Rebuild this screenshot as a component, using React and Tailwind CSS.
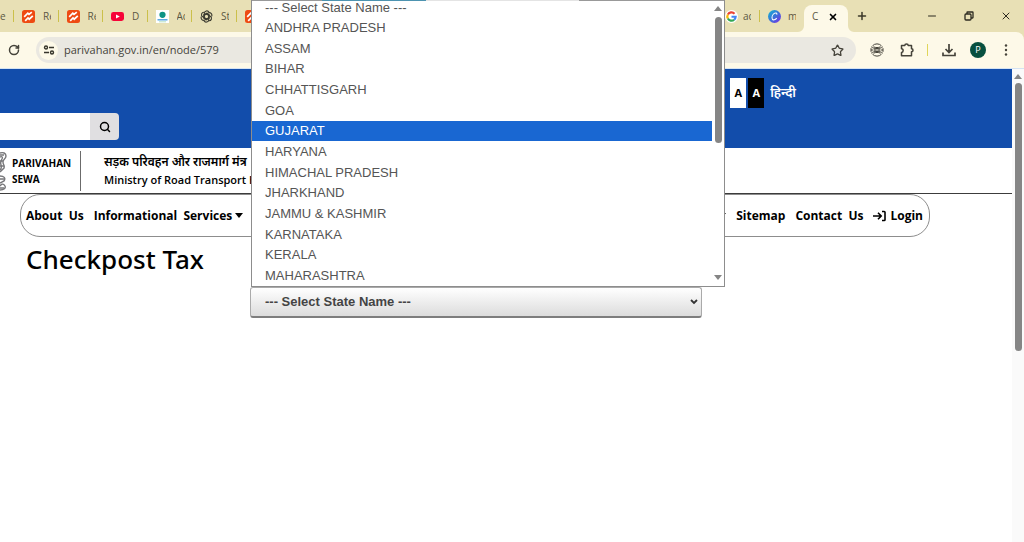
import React, { useState } from "react";
import { Minus, Plus, X, RotateCw, Star, Search } from "lucide-react";

const STATES = [
  "--- Select State Name ---",
  "ANDHRA PRADESH",
  "ASSAM",
  "BIHAR",
  "CHHATTISGARH",
  "GOA",
  "GUJARAT",
  "HARYANA",
  "HIMACHAL PRADESH",
  "JHARKHAND",
  "JAMMU & KASHMIR",
  "KARNATAKA",
  "KERALA",
  "MAHARASHTRA",
];

const OrangeIcon = () => (
  <svg viewBox="0 0 13 13" className="size-[13px] shrink-0">
    <rect width="13" height="13" rx="2.5" fill="#ee4a12" />
    <path d="M2.200 6.800 5.800 3.200 7 4.400l2.800-2.200M3.200 10.800 6 8l1.200 1.200 3.600-3.400" fill="none" stroke="#fff" strokeWidth="1.700" />
  </svg>
);

const YoutubeIcon = () => (
  <svg viewBox="0 0 13 13" className="size-[13px] shrink-0">
    <rect y="2" width="13" height="9" rx="2.4" fill="#f60438" />
    <path d="M5 4.4v4.2l3.8-2.1z" fill="#fff" />
  </svg>
);

const PortalIcon = () => (
  <svg viewBox="0 0 13 13" className="size-[13px] shrink-0">
    <rect width="13" height="13" fill="#fff" />
    <circle cx="6.5" cy="4.800" r="3.1" fill="#0e9384" />
    <path d="M1.5 9.800h10" stroke="#3d9be0" strokeWidth="1.3" />
    <path d="M3 11.8h7" stroke="#9bd4a8" strokeWidth=".7" />
  </svg>
);

const KnotIcon = () => (
  <svg viewBox="0 0 24 24" className="size-[13px] shrink-0" fill="none" stroke="#3b3a30" strokeWidth="2">
    {[0, 60, 120, 180, 240, 300].map((angle) => (
      <path
        key={angle}
        d="M8 12V6.2a4.6 4.6 0 0 1 8.6-2.2M8 9.7l5-2.9 5 2.9"
        transform={`rotate(${angle} 12 12)`}
      />
    ))}
  </svg>
);

const GoogleIcon = () => (
  <svg viewBox="0 0 24 24" className="size-[13px] shrink-0">
    <circle cx="12" cy="12" r="12" fill="#fff" />
    <g fill="none" strokeWidth="4">
      <path d="M17.6 6.7A7.7 7.7 0 0 0 5.3 8.3" stroke="#ea4335" />
      <path d="M5.3 8.3a7.7 7.7 0 0 0 0 7.4" stroke="#fbbc05" />
      <path d="M5.3 15.7a7.7 7.7 0 0 0 11.6 2.3" stroke="#34a853" />
      <path d="M16.9 18a7.7 7.7 0 0 0 2.8-5.6H12" stroke="#4285f4" />
    </g>
  </svg>
);

const CanvaIcon = () => (
  <svg viewBox="0 0 13 13" className="size-[13px] shrink-0">
    <defs>
      <linearGradient id="canva" x1="0" y1="0" x2="1" y2="1">
        <stop offset="0" stopColor="#10b9d4" />
        <stop offset=".5" stopColor="#3b72d8" />
        <stop offset="1" stopColor="#7d2ae8" />
      </linearGradient>
    </defs>
    <circle cx="6.5" cy="6.5" r="6.5" fill="url(#canva)" />
    <path d="M8.800 4.700c.4-1.600-1.200-2.200-2.500-1.300C4.500 4.600 3.600 7.200 4.300 8.900c.7 1.500 3 1.200 4.400-.8" fill="none" stroke="#fff" strokeWidth="1.100" />
  </svg>
);

const LEFT_TABS = [
  { icon: OrangeIcon, label: "Re" },
  { icon: OrangeIcon, label: "Re" },
  { icon: YoutubeIcon, label: "D" },
  { icon: PortalIcon, label: "Ac" },
  { icon: KnotIcon, label: "St" },
  { icon: OrangeIcon, label: "" },
];

const TabLabel = ({ children }) => (
  <span className="w-2 overflow-hidden whitespace-nowrap text-[10px] text-[#5c5843]">
    {children}
  </span>
);

const Divider = () => <span className="h-3 w-px bg-[#cbc04a]" />;

const TabStrip = () => (
  <div className="flex h-8 items-center justify-between bg-[#e8e0b5]">
    <div className="flex items-center">
      <span className="w-[13px] text-[10px] text-[#5c5843]">e</span>
      <div className="grid w-[267px] grid-cols-6">
        {LEFT_TABS.map(({ icon: Icon, label }, index) => (
          <div key={index} className="flex items-center gap-2">
            <Divider />
            <Icon />
            <TabLabel>{label}</TabLabel>
          </div>
        ))}
      </div>
    </div>

    <div className="flex h-full items-center">
      <GoogleIcon />
      <span className="w-[5px]" />
      <TabLabel>ac</TabLabel>
      <span className="w-2" />
      <Divider />
      <span className="w-2" />
      <CanvaIcon />
      <span className="w-[7px]" />
      <TabLabel>m</TabLabel>
      {/* Active tab */}
      <div className="relative ml-2 flex h-full w-[44px] items-end">
        <svg viewBox="0 0 6 6" className="absolute -left-[6px] bottom-0 size-[6px]">
          <path d="M6 0v6H0a6 6 0 0 0 6-6" fill="#fdf9e8" />
        </svg>
        <svg viewBox="0 0 6 6" className="absolute -right-[6px] bottom-0 size-[6px]">
          <path d="M0 0v6h6a6 6 0 0 1-6-6" fill="#fdf9e8" />
        </svg>
        <div className="flex h-[27px] w-full items-center justify-between rounded-t-lg bg-[#fdf9e8] pb-1 pl-2 pr-[10px]">
          <TabLabel>C</TabLabel>
          <button aria-label="Close tab">
            <X className="size-[10px] text-black" strokeWidth={4} />
          </button>
        </div>
      </div>
      <button aria-label="New tab" className="ml-2">
        <Plus className="size-3 text-[#3b3828]" strokeWidth={3} />
      </button>
      <div className="ml-[58px] mr-3 flex items-center gap-[25px] text-[#2c2a20]">
        <button aria-label="Minimize">
          <Minus className="size-3" strokeWidth={2} />
        </button>
        <button aria-label="Restore">
          <svg viewBox="0 0 12 12" className="size-3" fill="none" stroke="currentColor" strokeWidth="1.3">
            <rect x="2" y="4" width="6" height="6" rx="1" />
            <path d="M4 4V2.500q0-.5.5-.5h5q.5 0 .5.5v5q0 .5-.5.5H8" />
          </svg>
        </button>
        <button aria-label="Close">
          <X className="size-3" strokeWidth={2} />
        </button>
      </div>
    </div>
  </div>
);

const Toolbar = () => (
  <div className="bg-[#e8e0b5]">
    <div className="flex h-[37px] items-center rounded-tr-lg border-b border-[#d5e3f2] bg-[#fdf9e8] pl-2 pr-3 text-[#45433a]">
      <button aria-label="Reload">
        <RotateCw className="size-3" strokeWidth={3} />
      </button>
      <div className="ml-4 flex h-[26px] flex-1 items-center rounded-full bg-[#eae8e1] pl-[3px] pr-3">
        <span className="flex size-[19px] items-center justify-center rounded-full bg-[#fdf9e8]">
          <svg viewBox="0 0 12 12" className="size-3" fill="none" stroke="#37352c" strokeWidth="1.4">
            <circle cx="3" cy="3.500" r="1.500" />
            <path d="M6 3.500h5M1 8.500h5" />
            <circle cx="9" cy="8.500" r="1.500" />
          </svg>
        </span>
        <input
          aria-label="Address"
          className="ml-[6px] min-w-0 flex-1 bg-transparent text-[11px] text-[#45433a] outline-none"
          defaultValue="parivahan.gov.in/en/node/579"
        />
        <button aria-label="Bookmark">
          <Star className="size-[13px]" strokeWidth={2.4} />
        </button>
      </div>
      <div className="ml-[14px] flex items-center gap-4">
        <button aria-label="Site extension">
          <svg viewBox="0 0 14 14" className="size-[14px]" fill="none" stroke="currentColor" strokeWidth="1">
            <path d="M2.500 2.800a6.200 6.200 0 0 1 9 0M2.500 11.200a6.200 6.200 0 0 0 9 0M1 5.200v3.600M13 5.200v3.600" />
            <path d="M1.200 3.800C4 6.200 10 6.200 12.800 3.800M1.200 10.200C4 7.800 10 7.800 12.800 10.200M3.500 3.800c2 1 5 1 7 0M3.500 10.200c2-1 5-1 7 0M1 7h2.500M10.500 7H13" />
            <ellipse cx="7" cy="7" rx="2.600" ry="1.200" />
          </svg>
        </button>
        <button aria-label="Extensions">
          <svg viewBox="0 0 14 14" className="size-[14px]" fill="none" stroke="currentColor" strokeWidth="1.500">
            <path d="M1.500 2.500h3.300c0-2 3.400-2 3.400 0h3.300v3.300c2 0 2 3 0 3v4h-10V9.400c2.200 0 2.200-3.600 0-3.600z" strokeLinejoin="round" />
          </svg>
        </button>
      </div>
      <span className="ml-[13px] h-3 w-px bg-[#e0d65a]" />
      <button aria-label="Downloads" className="ml-[14px]">
        <svg viewBox="0 0 14 14" className="size-[14px]" fill="none" stroke="currentColor" strokeWidth="1.700">
          <path d="M7 1v8M3.500 6 7 9.500 10.500 6M1 9.500v3h12v-3" />
        </svg>
      </button>
      <button
        aria-label="Profile"
        className="ml-[14px] flex size-4 items-center justify-center rounded-full bg-[#07503f] text-[9px] text-white"
      >
        P
      </button>
      <button aria-label="Menu" className="ml-[14px]">
        <svg viewBox="0 0 12 12" className="size-3" fill="currentColor">
          <circle cx="6" cy="1.500" r="1.200" />
          <circle cx="6" cy="6" r="1.200" />
          <circle cx="6" cy="10.500" r="1.200" />
        </svg>
      </button>
    </div>
  </div>
);

const TopBar = () => (
  <div className="flex h-[79px] items-start justify-between bg-[#124dab]">
    <form className="mt-11 flex h-[27px]">
      <input aria-label="Search" className="w-[90px] bg-white px-2 text-xs outline-none" />
      <button
        type="button"
        aria-label="Search"
        className="flex w-[29px] items-center justify-center rounded-r-sm bg-[#e0dfe1]"
      >
        <Search className="size-3 text-black" strokeWidth={3} />
      </button>
    </form>
    <div className="mr-[216px] mt-[9px] flex h-[30px] items-center text-[11px] font-bold">
      <button className="h-full w-4 bg-white text-black">A</button>
      <button className="ml-[2px] h-full w-4 bg-black text-white">A</button>
      <a href="#hindi" className="ml-[6px] text-[13px] font-semibold text-white">
        हिन्दी
      </a>
    </div>
  </div>
);

const Emblem = () => (
  <svg viewBox="0 0 7 40" className="h-10 w-[7px]" fill="none" stroke="#77777a" strokeWidth="1.400">
    <path d="M0 2c3-1 6 0 6 3S3 8 3 11s2 3 1 6l-4 4M0 6c2-1 3 0 2 2s-2 3-1 6 0 4-1 5M0 25c4 0 6 2 4 5l-4 2M0 35c2-3 4-2 5 0s-1 4-5 4" />
    <path d="M0 4h4M0 10h3M0 15h4M0 28h4M0 37h4" />
  </svg>
);

const Branding = () => (
  <div className="flex h-[46px] items-center border-b border-[#3c3c3c]">
    <Emblem />
    <div className="ml-[5px] w-[68px] text-[10px] font-bold leading-4 text-black">
      PARIVAHAN SEWA
    </div>
    <span className="h-10 w-px bg-[#6b6b6b]" />
    <div className="ml-[23px] whitespace-nowrap text-black">
      <div className="text-xs font-semibold leading-[18px]">
        सड़क परिवहन और राजमार्ग मंत्र
      </div>
      <div className="text-[11px] font-semibold leading-[18px]">
        Ministry of Road Transport H
      </div>
    </div>
  </div>
);

const Caret = () => (
  <svg viewBox="0 0 8 5" className="h-[5px] w-2">
    <path d="M0 0h8L4 5z" fill="currentColor" />
  </svg>
);

const NavBar = () => (
  <nav className="ml-5 mr-[82px] flex h-[43px] items-center justify-between rounded-[20px] border border-[#8d8d8d] pl-[5px] pr-[6px] text-xs font-bold text-black">
    <div className="flex items-center gap-[10px]">
      <a href="#about">About&nbsp; Us</a>
      <a href="#services" className="flex items-center gap-[3px]">
        Informational&nbsp; Services
        <Caret />
      </a>
    </div>
    <div className="flex items-center gap-[10px]">
      <Caret />
      <a href="#sitemap">Sitemap</a>
      <a href="#contact">Contact&nbsp; Us</a>
      <a href="#login" className="flex items-center gap-1">
        <svg viewBox="0 0 13 12" className="h-3 w-[13px]" fill="none" stroke="currentColor" strokeWidth="1.600">
          <path d="M0 6h8M5 2.800 8.200 6 5 9.200M9 1.500h2.200q.8 0 .8.8v7.400q0 .8-.8.8H9" />
        </svg>
        Login
      </a>
    </div>
  </nav>
);

const StateSelect = () => {
  const [selected, setSelected] = useState(STATES[0]);
  const [active, setActive] = useState("GUJARAT");

  return (
    <div className="relative ml-[250px] mr-[310px] mt-[10px] font-['Liberation_Sans',Arial,sans-serif]">
      <select
        aria-label="State name"
        value={selected}
        onChange={(e) => setSelected(e.target.value)}
        className="block h-[31px] w-full appearance-none rounded-[3px] border border-b-2 border-[#aaa] border-b-[#7d7d7d] bg-linear-to-b from-white to-[#dcdcdc] px-[14px] text-[13px] font-bold text-[#444]"
      >
        {STATES.map((name) => (
          <option key={name}>{name}</option>
        ))}
      </select>
      <svg viewBox="0 0 8 6" className="pointer-events-none absolute right-1 top-3 h-[6px] w-2">
        <path d="M1 1l3 3 3-3" fill="none" stroke="#333" strokeWidth="1.800" />
      </svg>

      {/* Open list, drawn above the field */}
      <div className="absolute bottom-full -right-[23px] left-px flex h-[287px] border border-t-0 border-[#8d8d8d] bg-white">
        <div className="absolute inset-x-0 top-0 flex h-px">
          <span className="w-[70px] bg-[#999]" />
          <span className="w-[104px] bg-[#4d93b0]" />
          <span className="w-[153px] bg-[#e4e4e4]" />
          <span className="flex-1 bg-[#999]" />
        </div>
        <div className="flex h-full flex-1 flex-col justify-end overflow-hidden">
          <ul role="listbox" className="flex h-[289px] shrink-0 flex-col text-[13px] text-[#555]">
            {STATES.map((name) => (
              <li
                key={name}
                role="option"
                aria-selected={name === active}
                onMouseEnter={() => setActive(name)}
                onClick={() => setSelected(name)}
                className={`flex flex-1 items-center px-[13px] ${
                  name === active ? "bg-[#1967d2] text-white" : ""
                }`}
              >
                {name}
              </li>
            ))}
          </ul>
        </div>
        <div className="flex w-3 flex-col items-center pb-[6px] pt-[6px] text-[#858585]">
          <svg viewBox="0 0 8 5" className="h-[5px] w-2">
            <path d="M0 5h8L4 0z" fill="currentColor" />
          </svg>
          <span className="mt-[6px] h-[126px] w-[7px] rounded-full bg-[#858585]" />
          <span className="flex-1" />
          <Caret />
        </div>
      </div>
    </div>
  );
};

const App = () => {
  return (
    <div className="flex min-h-screen flex-col bg-white font-['Open_Sans','Noto_Sans',sans-serif]">
      <TabStrip />
      <Toolbar />
      <div className="flex flex-1">
        <main className="min-w-0 flex-1">
          <TopBar />
          <Branding />
          <NavBar />
          <h1 className="ml-[26px] mt-1 font-['Noto_Sans',sans-serif] text-[26px] font-medium leading-9 text-black">
            Checkpost Tax
          </h1>
          <StateSelect />
        </main>

        {/* Page scrollbar */}
        <div className="flex w-3 flex-col items-center bg-[#fafafa] pt-[5px] text-[#858585]">
          <svg viewBox="0 0 8 5" className="h-[5px] w-2">
            <path d="M0 5h8L4 0z" fill="currentColor" />
          </svg>
          <span className="mt-1 h-[268px] w-[7px] rounded-full bg-[#858585]" />
        </div>
      </div>
    </div>
  );
};

export default App;
